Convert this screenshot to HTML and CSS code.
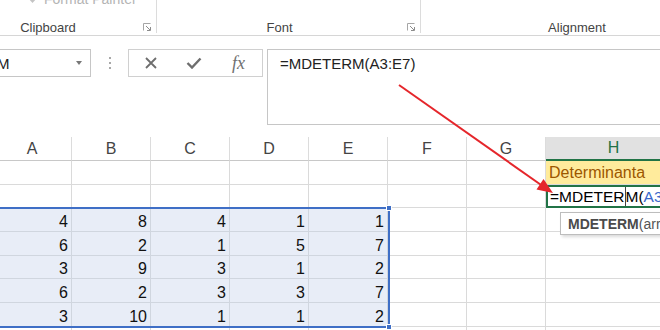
FILE: index.html
```html
<!doctype html>
<html lang="en">
<head>
    <meta charset="utf-8">
    <title>MDETERM - Determinanta</title>
    <link rel="stylesheet" href="styles.css">
</head>
<body>
    <!-- Ribbon (bottom part only) -->
    <div class="ribbon">
        <div class="group clipboard">
            <div class="tool-row">
                <svg class="brush" width="9" height="6" viewBox="0 0 9 6"><polygon points="0,0 9,0 4.5,5" fill="#c4c4c4"/></svg>
                <span class="faded">Format Painter</span>
            </div>
            <div class="group-label">
                <span>Clipboard</span>
                <svg class="launcher" width="8" height="8" viewBox="0 0 8 8"><path d="M0.5 7.5 V0.5 H7.5" stroke="#a6a6a6" fill="none"/><path d="M3 3 L7 7 M7.5 4 V7.5 H4" stroke="#8c8c8c" fill="none"/></svg>
            </div>
        </div>
        <div class="group font">
            <div class="group-label">
                <span>Font</span>
                <svg class="launcher" width="8" height="8" viewBox="0 0 8 8"><path d="M0.5 7.5 V0.5 H7.5" stroke="#a6a6a6" fill="none"/><path d="M3 3 L7 7 M7.5 4 V7.5 H4" stroke="#8c8c8c" fill="none"/></svg>
            </div>
        </div>
        <div class="group alignment">
            <div class="group-label">
                <span>Alignment</span>
                <span class="launcher-space"></span>
            </div>
        </div>
    </div>

    <!-- Name box + formula bar -->
    <div class="formula-bar">
        <div class="name-box">
            <span>M</span>
            <span class="drop-arrow"></span>
        </div>
        <div class="grip"><i></i><i></i><i></i></div>
        <div class="fx-box">
            <svg width="14" height="14" viewBox="0 0 14 14"><path d="M2 2 L12 12 M12 2 L2 12" stroke="#6e6e6e" stroke-width="1.8"/></svg>
            <svg width="16" height="12" viewBox="0 0 16 12"><path d="M1.5 6 L6 10.5 L14.5 1.5" stroke="#6e6e6e" stroke-width="2.4" fill="none"/></svg>
            <span class="fx">fx</span>
        </div>
        <div class="formula-input">=MDETERM(A3:E7)</div>
    </div>

    <!-- Worksheet -->
    <div class="sheet">
        <div class="col-head">A</div>
        <div class="col-head">B</div>
        <div class="col-head">C</div>
        <div class="col-head">D</div>
        <div class="col-head">E</div>
        <div class="col-head">F</div>
        <div class="col-head">G</div>
        <div class="col-head active">H</div>

        <div class="cell"></div><div class="cell"></div><div class="cell"></div><div class="cell"></div>
        <div class="cell"></div><div class="cell"></div><div class="cell"></div>
        <div class="cell neutral">Determinanta</div>

        <div class="cell"></div><div class="cell"></div><div class="cell"></div><div class="cell"></div>
        <div class="cell"></div><div class="cell"></div><div class="cell"></div>
        <div class="cell editing">=MDETER<span class="caret"></span>M(<span class="ref">A3</span></div>

        <div class="cell num sel">4</div><div class="cell num sel">8</div><div class="cell num sel">4</div><div class="cell num sel">1</div><div class="cell num sel">1</div>
        <div class="cell"></div><div class="cell"></div><div class="cell"></div>

        <div class="cell num sel">6</div><div class="cell num sel">2</div><div class="cell num sel">1</div><div class="cell num sel">5</div><div class="cell num sel">7</div>
        <div class="cell"></div><div class="cell"></div><div class="cell"></div>

        <div class="cell num sel">3</div><div class="cell num sel">9</div><div class="cell num sel">3</div><div class="cell num sel">1</div><div class="cell num sel">2</div>
        <div class="cell"></div><div class="cell"></div><div class="cell"></div>

        <div class="cell num sel">6</div><div class="cell num sel">2</div><div class="cell num sel">3</div><div class="cell num sel">3</div><div class="cell num sel">7</div>
        <div class="cell"></div><div class="cell"></div><div class="cell"></div>

        <div class="cell num sel">3</div><div class="cell num sel">10</div><div class="cell num sel">1</div><div class="cell num sel">1</div><div class="cell num sel">2</div>
        <div class="cell"></div><div class="cell"></div><div class="cell"></div>

        <div class="cell"></div><div class="cell"></div><div class="cell"></div><div class="cell"></div>
        <div class="cell"></div><div class="cell"></div><div class="cell"></div><div class="cell"></div>

        <!-- range selection A3:E7 -->
        <div class="selection">
            <span class="handle top"></span>
            <span class="handle bottom"></span>
        </div>

        <!-- function tooltip -->
        <div class="tooltip"><b>MDETERM</b>(array)</div>
    </div>

    <!-- red annotation arrow -->
    <svg class="annotation" width="660" height="330" viewBox="0 0 660 330">
        <line x1="399" y1="85" x2="544" y2="187" stroke="#e5262b" stroke-width="2"/>
        <polygon points="553,193 536.5,189.5 543.5,179" fill="#e5262b"/>
    </svg>
</body>
</html>
```

FILE: styles.css
```css
* {
    box-sizing: border-box;
}
html, body {
    margin: 0;
}
body {
    width: 660px;
    height: 330px;
    overflow: hidden;
    position: relative;
    background: #fff;
    font-family: "Liberation Sans", Arial, sans-serif;
    color: #222;
}

/* Ribbon */
.ribbon {
    display: flex;
    height: 36px;
    border-bottom: 1px solid #d6d6d6;
}
.group {
    flex: none;
    height: 33px;
    display: flex;
    flex-direction: column;
    justify-content: flex-end;
    border-right: 1px solid #dcdcdc;
}
.clipboard {
    width: 199px;
    margin-left: -42px;
    justify-content: space-between;
}
.font {
    width: 264px;
}
.alignment {
    width: 330px;
    border-right: none;
}
.tool-row {
    display: flex;
    align-items: flex-end;
    gap: 7px;
    height: 16px;
    margin-top: -9px;
    padding-left: 70px;
    font-size: 14px;
    line-height: 16px;
}
.brush {
    margin-bottom: 3px;
}
.faded {
    color: #b4b4b4;
}
.group-label {
    display: flex;
    align-items: center;
    height: 16px;
    margin-bottom: -2px;
    font-size: 13px;
    color: #444;
}
.group-label span:first-child {
    flex: 1;
    text-align: center;
}
.launcher,
.launcher-space {
    width: 8px;
    margin: 0 5px;
}

/* Formula bar */
.formula-bar {
    display: flex;
    align-items: flex-start;
    margin-top: 13px;
}
.name-box {
    width: 99px;
    height: 28px;
    margin-left: -8px;
    padding: 0 8px 0 4px;
    border: 1px solid #c6c6c6;
    display: flex;
    align-items: center;
    justify-content: space-between;
    font-size: 15px;
    color: #222;
}
.drop-arrow {
    width: 0;
    height: 0;
    border-left: 3.5px solid transparent;
    border-right: 3.5px solid transparent;
    border-top: 4px solid #777;
}
.grip {
    width: 37px;
    height: 28px;
    display: flex;
    flex-direction: column;
    align-items: center;
    justify-content: center;
    gap: 3px;
}
.grip i {
    width: 2px;
    height: 2px;
    background: #a8a8a8;
}
.fx-box {
    width: 135px;
    height: 28px;
    border: 1px solid #d0d0d0;
    display: grid;
    grid-template-columns: 43px 43px 47px;
    align-items: center;
    justify-items: center;
}
.fx {
    font-family: "Liberation Serif", "Times New Roman", serif;
    font-style: italic;
    font-size: 18px;
    color: #707070;
    line-height: 20px;
}
.formula-input {
    flex: 1;
    height: 76px;
    margin-left: 4px;
    margin-right: -10px;
    padding: 5px 12px;
    border: 1px solid #c6c6c6;
    font-size: 15px;
    line-height: 18px;
    color: #222;
}

/* Worksheet */
.sheet {
    position: relative;
    margin-top: 12px;
    margin-left: -7px;
    display: grid;
    grid-template-columns: repeat(7, 79px) 136px;
    grid-template-rows: 24px;
    grid-auto-rows: 23.7px;
    font-size: 16px;
}
.col-head {
    display: flex;
    align-items: center;
    justify-content: center;
    border-right: 1px solid #dcdcdc;
    border-bottom: 1px solid #c8c8c8;
    color: #444;
}
.col-head.active {
    background: #e1e1e1;
    color: #217346;
    border-bottom: 2px solid #217346;
}
.cell {
    display: flex;
    align-items: flex-end;
    padding: 0 3px;
    border-right: 1px solid #dadada;
    border-bottom: 1px solid #dadada;
    line-height: 19px;
    white-space: nowrap;
    color: #111;
}
.num {
    justify-content: flex-end;
}
.sel {
    background: #e8edf7;
    border-color: #d0d6df;
}
.neutral {
    background: #ffeb9c;
    color: #9c5700;
    align-items: center;
}
.editing {
    border: 2px solid #217346;
    padding: 0 2px;
    align-items: center;
    font-size: 15.5px;
    overflow: visible;
    color: #000;
}
.caret {
    align-self: stretch;
    width: 1px;
    background: #444;
}
.ref {
    color: #3a68cc;
}
.selection {
    position: absolute;
    left: 0;
    top: 70px;
    width: 397px;
    height: 121px;
    border: 2px solid #3f6fc6;
}
.handle {
    position: absolute;
    right: -4px;
    width: 6px;
    height: 6px;
    background: #3f6fc6;
    border: 1px solid #fff;
}
.handle.top {
    top: -4px;
}
.handle.bottom {
    bottom: -4px;
}
.tooltip {
    position: absolute;
    left: 567px;
    top: 75px;
    height: 23px;
    padding: 0 7px;
    display: flex;
    align-items: center;
    background: #fff;
    border: 1px solid #bdbdbd;
    box-shadow: 2px 2px 3px rgba(0,0,0,0.15);
    font-size: 14px;
    color: #555;
    white-space: nowrap;
}
.tooltip b {
    color: #4a4a4a;
}

/* Annotation */
.annotation {
    position: absolute;
    top: 0;
    left: 0;
    pointer-events: none;
}
```
